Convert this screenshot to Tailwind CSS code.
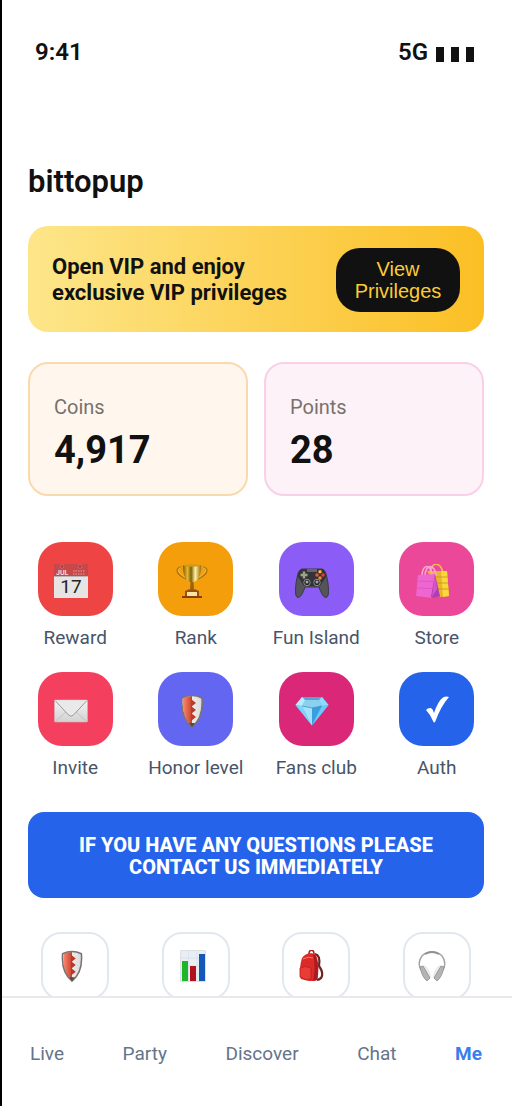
<!DOCTYPE html>
<html lang="en">
<head>
  <meta charset="UTF-8" />
  <meta name="viewport" content="width=device-width, initial-scale=1.0"/>
  <title>bittopup</title>
  <script src="https://cdn.jsdelivr.net/npm/@tailwindcss/browser@4"></script>
</head>
<body class="h-screen flex flex-col overflow-hidden bg-white border-l-2 border-black text-[#111111] font-[Roboto,sans-serif]">

  <!-- Status Bar -->
  <header class="flex justify-between items-center pt-9 pl-[33px] pr-[38px] text-2xl leading-8 font-semibold">
    <span>9:41</span>
    <div class="flex items-center gap-2">
      <span>5G</span>
      <span class="flex gap-[7px] pt-1" aria-label="Signal">
        <i class="w-2 h-[15px] bg-[#111111]"></i>
        <i class="w-2 h-[15px] bg-[#111111]"></i>
        <i class="w-2 h-[15px] bg-[#111111]"></i>
      </span>
    </div>
  </header>

  <!-- Main Content -->
  <main class="flex-1 min-h-0 overflow-hidden pl-[26px] pr-7 pt-24">
    <h1 class="text-[31px] leading-9 font-semibold">bittopup</h1>

    <!-- VIP banner -->
    <section class="mt-[26px] flex items-center justify-between rounded-[20px] bg-linear-to-r/srgb from-[#fde68a] to-[#fbbf24] px-6 pt-0.5 h-[106px]">
      <p class="text-[22px] leading-[26px] font-bold">Open VIP and enjoy<br>exclusive VIP privileges</p>
      <button class="w-[124px] h-16 rounded-[24px] bg-[#111111] text-[#fbcb35] text-[20px] leading-[22px] font-['Liberation_Sans',sans-serif]">View Privileges</button>
    </section>

    <!-- Balances -->
    <section class="mt-[30px] grid grid-cols-2 gap-4">
      <div class="h-[134px] rounded-[20px] border-2 border-[#fad9ae] bg-[#fff7ed] px-6 pt-[31px]">
        <p class="text-[20px] leading-6 text-[#78716c]">Coins</p>
        <p class="mt-2 text-[38px] leading-[46px] font-bold">4,917</p>
      </div>
      <div class="h-[134px] rounded-[20px] border-2 border-[#f8d0e8] bg-[#fdf2f8] px-6 pt-[31px]">
        <p class="text-[20px] leading-6 text-[#78716c]">Points</p>
        <p class="mt-2 text-[38px] leading-[46px] font-bold">28</p>
      </div>
    </section>

    <!-- Shortcuts -->
    <section class="mt-[46px] grid grid-cols-4 gap-x-[26px] gap-y-[22px] text-[19px] leading-6 text-[#475569]">
      <a href="#reward" class="flex flex-col items-center gap-2.5 whitespace-nowrap">
        <span class="w-[75px] h-[74px] rounded-[24px] bg-[#ef4444] flex items-center justify-center pr-2 pt-1">
          <svg class="w-[34px] h-[34px]" viewBox="0 0 34 34">
            <path d="M0 12h34v22H0z" fill="#e7e5e4"/>
            <path d="M0 0h34v12H0z" fill="#c5484b"/>
            <path d="M0 12.5h34" stroke="#bdb4b3"/>
            <circle cx="8" cy="2.500" r="1.800" fill="#a8383c" stroke="#e57373" stroke-width=".7"/>
            <circle cx="26" cy="2.500" r="1.800" fill="#a8383c" stroke="#e57373" stroke-width=".7"/>
            <text x="2" y="11" font-family="Roboto" font-size="7" font-weight="700" fill="#f3dede">JUL</text>
            <path d="M19 7h12M19 10h12" stroke="#da8584" stroke-width="1.500" stroke-dasharray="1.500 1"/>
            <text x="17" y="29" text-anchor="middle" font-family="Roboto" font-size="19" fill="#262626">17</text>
          </svg>
        </span>
        <span>Reward</span>
      </a>
      <a href="#rank" class="flex flex-col items-center gap-2.5 whitespace-nowrap">
        <span class="w-[75px] h-[74px] rounded-[24px] bg-[#f59e0b] flex items-center justify-center pr-2 pt-1">
          <svg class="w-[34px] h-[34px]" viewBox="0 0 34 34">
            <defs>
              <linearGradient id="gold">
                <stop offset="0" stop-color="#8a5a06"/><stop offset=".25" stop-color="#e0b92e"/><stop offset=".45" stop-color="#806008"/>
                <stop offset=".68" stop-color="#fff2a0"/><stop offset="1" stop-color="#9a6a08"/>
              </linearGradient>
            </defs>
            <path d="M9 4C4 2 1 5 3 9c2 3 5 4 8 6M25 4c5-2 8 1 6 5-2 3-5 4-8 6" fill="none" stroke="#b3780e" stroke-width="1.800"/>
            <path d="M9 4C5 3 2 5 4 8c2 3 4 4 7 6M25 4c4-1 7 1 5 4-2 3-4 4-7 6" fill="none" stroke="#f8cf55" stroke-width=".8"/>
            <path d="M8 1h18c0 8-1 14-7 17h-4C9 15 8 9 8 1z" fill="url(#gold)"/>
            <ellipse cx="17" cy="1.500" rx="9" ry="1.200" fill="#c99a1b"/>
            <path d="M15.500 18h3l.5 7h-4z" fill="#9a6508"/>
            <path d="M10 27q3-2 7-2t7 2v5H10z" fill="#9b4f16"/>
            <path d="M12 28h10v4H12z" fill="#fbe3a0"/>
            <path d="M7 32h20v2H7z" fill="#8a3d10"/>
          </svg>
        </span>
        <span>Rank</span>
      </a>
      <a href="#fun" class="flex flex-col items-center gap-2.5 whitespace-nowrap">
        <span class="w-[75px] h-[74px] rounded-[24px] bg-[#8b5cf6] flex items-center justify-center pr-2 pt-1">
          <svg class="w-[34px] h-[34px]" viewBox="0 0 34 34">
            <path d="M8 5h18c4 0 5 4 6 9 2 9 2 18 0 19-3 2-6-4-8-10H10C8 29 5 35 2 33c-2-1-2-10 0-19 1-5 2-9 6-9z" fill="#55545a" stroke="#3a393e"/>
            <path d="M8 5h18c3 0 5 3 5 8l-6 9H9l-6-9c0-5 2-8 5-8z" fill="#343338"/>
            <path d="M12 5h10v3H12z" fill="#66656b"/>
            <path d="M9 7.500v7M5.500 11h7" stroke="#a0a28d" stroke-width="2.400"/>
            <circle cx="25" cy="7.800" r="1.700" fill="#f6b73c"/><circle cx="22" cy="11" r="1.700" fill="#e65b3d"/>
            <circle cx="28" cy="11" r="1.700" fill="#e8402e"/><circle cx="25" cy="14" r="1.700" fill="#f08b35"/>
            <circle cx="12" cy="18.500" r="3.200" fill="#222" stroke="#8d9293"/><circle cx="12" cy="18" r="1.500" fill="#a3a9a9"/>
            <circle cx="22" cy="18.500" r="3.200" fill="#222" stroke="#8d9293"/><circle cx="22" cy="18" r="1.500" fill="#a3a9a9"/>
          </svg>
        </span>
        <span>Fun Island</span>
      </a>
      <a href="#store" class="flex flex-col items-center gap-2.5 whitespace-nowrap">
        <span class="w-[75px] h-[74px] rounded-[24px] bg-[#ec4899] flex items-center justify-center pr-2 pt-1">
          <svg class="w-[34px] h-[34px]" viewBox="0 0 34 34">
            <path d="M14 10c0-13 12-13 13 0" fill="none" stroke="#f5b94e" stroke-width="1.600"/>
            <path d="M11 7h20l2 25-9 1z" fill="#eab52c"/>
            <path d="M25 7h6l2 25-6 1z" fill="#f8d83b"/>
            <path d="M12 13h20M12 19h20M12 25h21" stroke="#c98d23" stroke-width=".8"/>
            <path d="M6 14C5-1 16-1 16 12M9 12c0-12 10-13 11 0" fill="none" stroke="#f9a8d4" stroke-width="1.600"/>
            <path d="M2 11l17-1-2 24-17-2z" fill="#ee67d0"/>
            <path d="M19 10l5 22-7 2-2-1z" fill="#b13cb3"/>
            <path d="M19 10l2 15-5 8z" fill="#d455c8"/>
            <path d="M1.500 17l16 .5M1 24l16 .5" stroke="#d44fbd" stroke-width=".7"/>
          </svg>
        </span>
        <span>Store</span>
      </a>
      <a href="#invite" class="flex flex-col items-center gap-2.5 whitespace-nowrap">
        <span class="w-[75px] h-[74px] rounded-[24px] bg-[#f43f5e] flex items-center justify-center pr-2 pt-1">
          <svg class="w-[34px] h-[34px]" viewBox="0 0 34 34">
            <defs>
              <linearGradient id="paper" x2="0" y2="1"><stop stop-color="#f4f4f4"/><stop offset="1" stop-color="#d2d2d2"/></linearGradient>
            </defs>
            <rect x=".5" y="6" width="33" height="22" rx="1" fill="url(#paper)" stroke="#c9b9bb" stroke-width=".6"/>
            <path d="M2 27l11-10M32 27L21 17" stroke="#bbb" stroke-width=".8"/>
            <path d="M1.500 7l13 14q2.500 2.500 5 0l13-14" fill="#e9e9e9" stroke="#999" stroke-width="1"/>
          </svg>
        </span>
        <span>Invite</span>
      </a>
      <a href="#honor" class="flex flex-col items-center gap-2.5 whitespace-nowrap">
        <span class="w-[75px] h-[74px] rounded-[24px] bg-[#6366f1] flex items-center justify-center pr-2 pt-1">
          <svg class="w-[34px] h-[34px]" viewBox="0 0 34 34">
            <defs>
              <linearGradient id="shieldRed"><stop stop-color="#ff8a70"/><stop offset="1" stop-color="#c8402e"/></linearGradient>
              <linearGradient id="shieldWhite"><stop stop-color="#fff"/><stop offset="1" stop-color="#d9d9d9"/></linearGradient>
            </defs>
            <path d="M17 1.500q5 0 10 2.500c1 12-1 22-10 29C8 26 6 16 7 4q5-2.500 10-2.500z" fill="url(#shieldWhite)"/>
            <path d="M17 2q-5 0-9 2.500C7 16 9 26 17 32z" fill="url(#shieldRed)"/>
            <path d="M16 5l5 4-5 4zM16 12l5 4-5 4zM16 19l5 4-5 4z" fill="#b93a29"/>
            <path d="M17 1.500q5 0 10 2.500c1 12-1 22-10 29C8 26 6 16 7 4q5-2.500 10-2.500z" fill="none" stroke="#7d716d" stroke-width="1.600"/>
            <path d="M14 29l3 4 3-4" fill="#5a4742"/>
          </svg>
        </span>
        <span>Honor level</span>
      </a>
      <a href="#fans" class="flex flex-col items-center gap-2.5 whitespace-nowrap">
        <span class="w-[75px] h-[74px] rounded-[24px] bg-[#db2777] flex items-center justify-center pr-2 pt-1">
          <svg class="w-[34px] h-[34px]" viewBox="0 0 34 34">
            <path d="M7 3h20l6.500 8L17 31.500.5 11z" fill="#56b8ec"/>
            <path d="M7 3h20l-3 3H10z" fill="#56a5cf"/>
            <path d="M10 6h14l3 6-10 2-10-2z" fill="#8cd0f0"/>
            <path d="M.5 11L7 3l3 3-3 6z" fill="#b9ebff"/>
            <path d="M33.500 11L27 3l-3 3 3 6z" fill="#8bdcff"/>
            <path d="M.5 11l6.500 1 10 19.500z" fill="#7fd4fb"/>
            <path d="M7 12l10 2v17.500z" fill="#a6e3fb"/>
            <path d="M27 12l-10 2v17.500z" fill="#3a9fe0"/>
            <path d="M33.500 11l-6.500 1-10 19.500z" fill="#6fc9f6"/>
            <path d="M7 12l10 2 10-2" fill="none" stroke="#3d8fc0" stroke-width=".7"/>
          </svg>
        </span>
        <span>Fans club</span>
      </a>
      <a href="#auth" class="flex flex-col items-center gap-2.5 whitespace-nowrap">
        <span class="w-[75px] h-[74px] rounded-[24px] bg-[#2563eb] flex items-center justify-center">
          <svg class="w-[34px] h-[34px]" viewBox="0 0 34 34">
            <path d="M6 18q2-2.500 5-2Q13 17 14 21 18 9 23 5.500q3-1.500 6-.5Q21 14 15.500 29q-1.300 3-2.500 0Q10 22 6 18z" fill="#fff"/>
          </svg>
        </span>
        <span>Auth</span>
      </a>
    </section>

    <!-- Contact -->
    <button class="mt-8 w-full h-[86px] rounded-[16px] bg-[#2563eb] px-10 pt-0.5 text-white text-[20px] leading-[22px] font-extrabold">IF YOU HAVE ANY QUESTIONS PLEASE CONTACT US IMMEDIATELY</button>

    <!-- More shortcuts, cut off by the tab bar -->
    <section class="mt-[34px] grid grid-cols-4 gap-x-[26px] justify-items-center">
      <button aria-label="Guard" class="w-[68px] h-[68px] rounded-[20px] border-2 border-[#e2e8f0] flex items-center justify-center pr-1.5">
        <svg class="w-8 h-8" viewBox="0 0 34 34">
          <path d="M17 1.500q5 0 10 2.500c1 12-1 22-10 29C8 26 6 16 7 4q5-2.500 10-2.500z" fill="url(#shieldWhite)"/>
          <path d="M17 2q-5 0-9 2.500C7 16 9 26 17 32z" fill="url(#shieldRed)"/>
          <path d="M16 5l5 4-5 4zM16 12l5 4-5 4zM16 19l5 4-5 4z" fill="#b93a29"/>
          <path d="M17 1.500q5 0 10 2.500c1 12-1 22-10 29C8 26 6 16 7 4q5-2.500 10-2.500z" fill="none" stroke="#7d716d" stroke-width="1.600"/>
          <path d="M14 29l3 4 3-4" fill="#5a4742"/>
        </svg>
      </button>
      <button aria-label="Statistics" class="w-[68px] h-[68px] rounded-[20px] border-2 border-[#e2e8f0] flex items-center justify-center pr-1.5">
        <svg class="w-8 h-8" viewBox="0 0 32 32">
          <path d="M3.500.5h25v31h-25z" fill="#e8eef4" stroke="#cfd6dd" stroke-width=".7"/>
          <path d="M4 8h24M4 16h24M4 24h24M11.500 1v30M20 1v30" stroke="#d3dbe3" stroke-width=".6"/>
          <path d="M5 11h6v20H5z" fill="#1eb52a"/>
          <path d="M13 16h6v15h-6z" fill="#b0121b"/>
          <path d="M22 4h6v27h-6z" fill="#1458b8"/>
        </svg>
      </button>
      <button aria-label="Backpack" class="w-[68px] h-[68px] rounded-[20px] border-2 border-[#e2e8f0] flex items-center justify-center pr-2.5">
        <svg class="w-8 h-8" viewBox="0 0 32 32">
          <path d="M20 4c5 1 5 6 4 12 5 7 4 13-2 14" fill="none" stroke="#6d2626" stroke-width="2.200"/>
          <path d="M14 4c0-5 5-5 5 0" fill="none" stroke="#a81f1f" stroke-width="1.600"/>
          <path d="M7 8c3-5 10-6 14-3 3 6 3 18 1 25-4 2-10 1-16-1-2-5-1-15 1-21z" fill="#dc2a28"/>
          <path d="M20 5c3 6 4 18 2 25l-4 1c2-9 2-19 0-27z" fill="#a71c20"/>
          <path d="M5 18q5-3 11 0v11q-5 2-11-2z" fill="#e93c35" stroke="#b52022" stroke-width=".8"/>
          <path d="M8 9q5-3 10-1" fill="none" stroke="#ff7468" stroke-width="1"/>
        </svg>
      </button>
      <button aria-label="Support" class="w-[68px] h-[68px] rounded-[20px] border-2 border-[#e2e8f0] flex items-center justify-center pr-2.5">
        <svg class="w-8 h-8" viewBox="0 0 32 32">
          <path d="M5 20C1 13 4 2 16 2s15 11 11 18" fill="none" stroke="#a3a3a3" stroke-width="1.500"/>
          <path d="M9 4q7-4 14 0" fill="none" stroke="#8f8f8f" stroke-width="2"/>
          <path d="M7 15q4-1 8 10l-1 4-5-6z" fill="#ececec"/>
          <path d="M25 15q-4-1-8 10l1 4 5-6z" fill="#ececec"/>
          <path d="M4 17l3-1 7 12-3 3q-5-4-7-14z" fill="#b5b5b5" stroke="#8a8a8a" stroke-width=".8"/>
          <path d="M28 17l-3-1-7 12 3 3q5-4 7-14z" fill="#b5b5b5" stroke="#8a8a8a" stroke-width=".8"/>
        </svg>
      </button>
    </section>
  </main>

  <!-- Tab Bar -->
  <nav class="shrink-0 h-[110px] border-t-2 border-[#e8e9ec] bg-white flex items-center justify-between pl-7 pr-[30px] pt-1 text-[19px] leading-6 text-[#64748b]">
    <a href="#live">Live</a>
    <a href="#party">Party</a>
    <a href="#discover">Discover</a>
    <a href="#chat">Chat</a>
    <a href="#me" class="font-bold text-[#3b7ded]">Me</a>
  </nav>

</body>
</html>
